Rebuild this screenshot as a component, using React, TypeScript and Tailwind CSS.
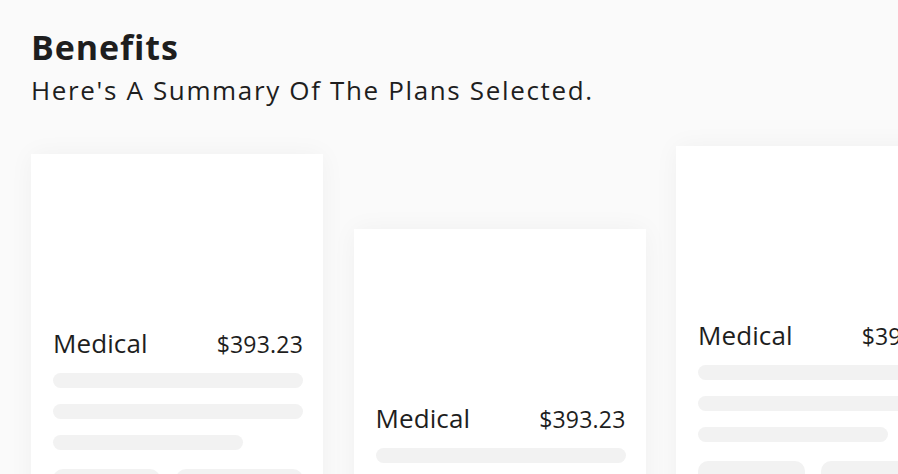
import React from 'react';

type Plan = { name: string; price: string; offset: string };

const plans: Plan[] = [
  { name: 'Medical', price: '$393.23', offset: 'mt-[8px]' },
  { name: 'Medical', price: '$393.23', offset: 'mt-[83px]' },
  { name: 'Medical', price: '$393.23', offset: 'mt-0' },
];

const PlanCard = ({ plan }: { plan: Plan }) => (
  <div
    className={`w-[292px] shrink-0 bg-white shadow-[0_0_24px_rgba(0,0,0,0.045)] ${plan.offset}`}
  >
    <div className="h-[173px]" />
    <div className="pl-[22px] pr-[20px] pb-6">
      <div className="flex items-baseline justify-between text-[26px] leading-[32px] text-[#1e1e1e]">
        <span className="tracking-[0.1px]">{plan.name}</span>
        <span className="text-[23px] tracking-[0.2px]">{plan.price}</span>
      </div>
      <div className="mt-[13px] flex flex-col gap-4">
        <div className="h-[15px] w-full rounded-full bg-[#f2f2f2]" />
        <div className="h-[15px] w-full rounded-full bg-[#f2f2f2]" />
        <div className="h-[15px] w-[190px] rounded-full bg-[#f2f2f2]" />
      </div>
      <div className="mt-[19px] flex gap-4">
        <div className="h-[40px] w-[109px] rounded-[10px] bg-[#f2f2f2]" />
        <div className="h-[40px] w-[129px] rounded-[10px] bg-[#f2f2f2]" />
      </div>
    </div>
  </div>
);

export default function App() {
  return (
    <div
      className="h-[474px] w-[898px] overflow-hidden bg-[#fafafa] pl-[31px] pt-[27px]"
      style={{ fontFamily: '"Open Sans", "Noto Sans", sans-serif' }}
    >
      <h1 className="text-[34px] font-bold leading-[40px] tracking-[0.9px] text-[#1e1e1e]">Benefits</h1>
      <p className="mt-[7px] text-[26px] leading-[32px] tracking-[1.65px] text-[#1e1e1e]">
        Here's A Summary Of The Plans Selected.
      </p>
      <div className="mt-[40px] flex items-start gap-[30.5px]">
        {plans.map((p, i) => (
          <PlanCard key={i} plan={p} />
        ))}
      </div>
    </div>
  );
}
